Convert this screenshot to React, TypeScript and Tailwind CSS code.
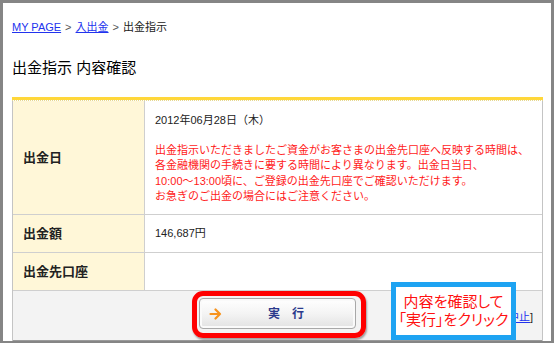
import React from 'react'

const jp = "font-['Liberation_Sans','Noto_Sans_CJK_JP',sans-serif]"

export default function App() {
  return (
    <div className={`relative h-[343px] w-[554px] overflow-hidden border-t-[3px] border-l-[3px] border-r-[3px] border-b-[2px] border-[#858585] bg-white ${jp} text-[#222]`}>
      <div className="pl-[9px] pr-[5px]">
        <nav className="mt-[16px] flex items-center gap-[4px] text-[11px] leading-[16px]">
          <a className="text-[#2233ee] underline">MY PAGE</a>
          <span className="text-[#555]">&gt;</span>
          <a className="text-[#2233ee] underline">入出金</a>
          <span className="text-[#555]">&gt;</span>
          <span>出金指示</span>
        </nav>

        <h1 className="mt-[23px] text-[15px] leading-[20px] font-normal text-[#000]">出金指示 内容確認</h1>

        <div className="mt-[19px] h-[3px] w-[531px] bg-[#ffd73a]" />
        <div className="h-px w-[531px] border-b border-dotted border-[#e6d890]" />

        <div className="w-[531px] border-x border-[#c4c4c4]">
          <div className="grid grid-cols-[132px_1fr] border-b border-[#cfcfcf]">
            <div className="flex h-[113px] items-center border-r border-[#cfcfcf] bg-[#fff7d8] pl-[10px] text-[13px] font-bold">出金日</div>
            <div className="pl-[10px] pt-[12px] text-[11px] leading-[15.5px]">
              <p>2012年06月28日（木）</p>
              <p className="mt-[14px] text-[#ff1a1a]">
                出金指示いただきましたご資金がお客さまの出金先口座へ反映する時間は、<br />
                各金融機関の手続きに要する時間により異なります。出金日当日、<br />
                10:00～13:00頃に、ご登録の出金先口座でご確認いただけます。<br />
                お急ぎのご出金の場合にはご注意ください。
              </p>
            </div>
          </div>
          <div className="grid grid-cols-[132px_1fr] border-b border-[#cfcfcf]">
            <div className="flex h-[37px] items-center border-r border-[#cfcfcf] bg-[#fff7d8] pl-[10px] text-[13px] font-bold">出金額</div>
            <div className="flex items-center pl-[10px] text-[11px]">146,687円</div>
          </div>
          <div className="grid grid-cols-[132px_1fr] border-b border-[#cfcfcf]">
            <div className="flex h-[37px] items-center border-r border-[#cfcfcf] bg-[#fff7d8] pl-[10px] text-[13px] font-bold">出金先口座</div>
            <div />
          </div>

          <div className="relative flex h-[50px] items-start justify-center border-b border-[#9a9a9a] bg-[#f3f3f3] pt-[7px]">
            <button className="flex h-[31px] w-[157px] items-center rounded-[4px] border border-[#a8a8a8] bg-gradient-to-b from-[#ffffff] via-[#f4f4f4] to-[#e2e2e2] pl-[9px] shadow-[inset_0_0_0_2px_#fafafa]">
              <svg width="13" height="12" viewBox="0 0 13 12" fill="none" stroke="#f7931e" strokeWidth="2.2" strokeLinecap="round" strokeLinejoin="round">
                <path d="M1.5 6h9.5M6.5 1.5 11 6l-4.5 4.5" />
              </svg>
              <span className="ml-[46px] text-[12px] font-bold tracking-[12px] text-[#2a3a8c]">実行</span>
            </button>
            <span className="absolute right-[9px] top-[18px] text-[11px]">
              [<a className="text-[#2233ee] underline">中止</a>]
            </span>
          </div>
        </div>
      </div>

      {/* annotation overlays */}
      <div className="absolute left-[189px] top-[288px] h-[47px] w-[174px] rounded-[11px] border-[5px] border-[#ff0000] shadow-[1px_2px_2px_rgba(0,0,0,0.35)]" />
      <div className="absolute left-[388px] top-[279px] flex h-[58px] w-[125px] flex-col items-center justify-center border-[5px] border-[#1ea3f2] bg-white text-[15px] leading-[18px] text-[#ff1010] [font-feature-settings:'palt']">
        <span>内容を確認して</span>
        <span>「実行」をクリック</span>
      </div>
    </div>
  )
}
